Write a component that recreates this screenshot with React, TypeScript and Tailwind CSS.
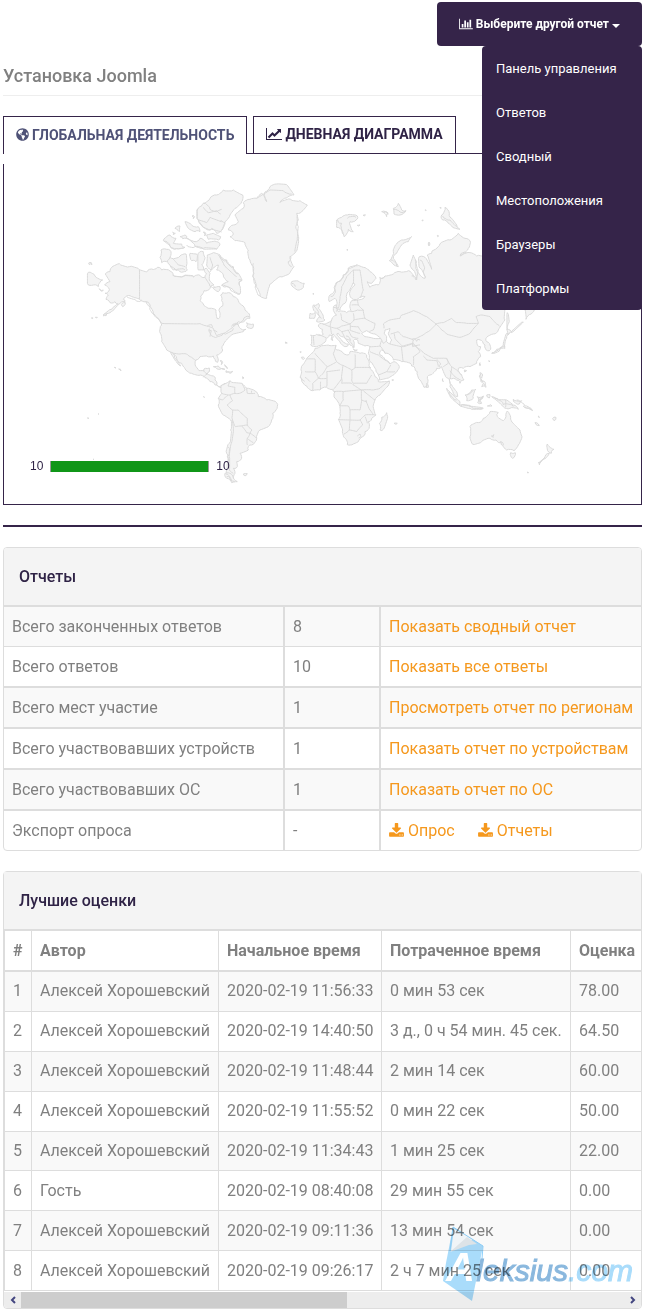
import { useState } from "react";
import { FaGlobeAmericas } from "react-icons/fa";

type Point = [number, number];

const reports = [
  { label: "Всего законченных ответов", value: "8", link: "Показать сводный отчет" },
  { label: "Всего ответов", value: "10", link: "Показать все ответы" },
  { label: "Всего мест участие", value: "1", link: "Просмотреть отчет по регионам" },
  { label: "Всего участвовавших устройств", value: "1", link: "Показать отчет по устройствам" },
  { label: "Всего участвовавших ОС", value: "1", link: "Показать отчет по ОС" },
];

const scores = [
  { author: "Алексей Хорошевский", start: "2020-02-19 11:56:33", spent: "0 мин 53 сек", score: "78.00" },
  { author: "Алексей Хорошевский", start: "2020-02-19 14:40:50", spent: "3 д., 0 ч 54 мин. 45 сек.", score: "64.50" },
  { author: "Алексей Хорошевский", start: "2020-02-19 11:48:44", spent: "2 мин 14 сек", score: "60.00" },
  { author: "Алексей Хорошевский", start: "2020-02-19 11:55:52", spent: "0 мин 22 сек", score: "50.00" },
  { author: "Алексей Хорошевский", start: "2020-02-19 11:34:43", spent: "1 мин 25 сек", score: "22.00" },
  { author: "Гость", start: "2020-02-19 08:40:08", spent: "29 мин 55 сек", score: "0.00" },
  { author: "Алексей Хорошевский", start: "2020-02-19 09:11:36", spent: "13 мин 54 сек", score: "0.00" },
  { author: "Алексей Хорошевский", start: "2020-02-19 09:26:17", spent: "2 ч 7 мин 25 сек", score: "0.00" },
];

const menuItems = ["Панель управления", "Ответов", "Сводный", "Местоположения", "Браузеры", "Платформы"];

// Map regions. Each one has its own origin, three units to a pixel.
const regions = [
  {
    x: 70,
    y: 170,
    land: [
      "148,281 178,290 208,299 230,306 245,297 262,292 275,300 300,303 310,316 340,318 372,320 390,316 405,322 410,312 402,300 410,295 420,310 418,330 432,345 420,355 402,362 392,378 390,392 400,402 420,415 438,420 440,440 446,446 450,436 447,422 458,408 455,392 452,375 458,368 475,368 490,380 505,392 515,405 525,420 538,432 540,445 525,452 505,455 490,466 505,464 512,476 528,478 520,485 490,492 470,510 460,525 458,540 440,555 445,570 443,577 435,568 430,558 410,558 390,560 378,570 378,590 387,602 402,602 406,595 418,594 418,605 412,612 430,618 435,630 440,645 453,648 465,640 455,654 445,650 435,645 420,635 405,623 387,616 365,610 345,595 335,580 320,565 305,548 290,540 275,515 271,490 275,465 265,445 250,430 240,410 228,395 208,387 185,380 170,378 160,388 165,395 150,400 135,415 115,430 100,438 125,418 145,402 135,395 120,398 108,388 115,375 105,370 118,358 104,345 120,335 106,312 120,305 125,292",
      "520,98 540,88 560,85 575,70 590,95 585,66 600,50 620,42 650,44 672,75 650,84 630,98 662,88 690,92 712,105 695,125 680,130 685,150 678,175 685,210 678,245 660,260 672,290 660,308 630,320 605,340 598,350 590,385 570,378 558,350 548,320 550,290 540,270 535,240 525,218 495,212 480,200 490,192 475,180 490,165 505,155 495,135 520,115",
      "400,100 420,85 440,75 460,60 490,60 518,75 515,95 495,115 480,135 465,155 455,180 440,190 425,175 415,180 395,165 385,150 385,115 395,108",
      "290,262 305,265 330,258 348,252 350,285 352,300 330,305 310,300 300,285",
      "273,240 290,238 303,245 300,262 290,275 275,278 270,262",
      "412,255 430,248 450,255 470,270 490,290 505,310 516,330 508,345 510,372 490,360 470,350 455,345 475,335 460,315 440,300 445,285 425,300 410,285",
      "280,212 300,195 318,205 310,220 335,222 345,232 320,236 300,228",
      "350,205 375,215 390,205 410,220 440,215 450,225 440,238 400,235 375,228",
      "345,155 365,165 385,170 390,185 375,185 355,175",
      "315,175 330,168 328,185",
      "410,195 430,190 452,200 445,210 415,208",
      "360,250 380,252 378,275 365,272",
      "385,250 400,245 405,262 395,285 400,300 385,300",
      "55,307 75,318 98,330 85,350 70,345 55,345",
      "530,458 550,462 548,474 530,470",
      "430,355 450,350 445,365",
      "56,279 64,278 66,284 58,284",
      "430,590 445,588 465,598 450,598 436,592",
      "468,602 488,604 480,610 468,607",
      "330,200 345,195 350,205 338,206",
      "88,356 100,360 92,362",
      "366,138 374,140 370,146",
      "64,444 68,443 68,446",
      "76,442 82,442 80,444",
      "100,434 110,432 104,437",
      "154,404 166,398 158,410",
      "308,186 316,190 310,194",
      "400,186 408,192 404,198",
    ],
    shores: [
      "385,115 385,150 395,165 425,178 455,186",
      "400,100 420,118 440,125 455,118",
      "452,150 465,158 456,180",
      "282,214 300,228 320,236 345,232",
      "350,225 375,230 400,237 440,236",
      "300,290 318,302 345,300",
      "450,258 470,272 490,292 505,312",
      "505,330 516,332 508,345",
      "455,346 480,356 510,372",
      "308,316 340,320 372,322",
      "405,322 418,342 434,350",
      "228,395 240,412 252,432 275,460",
      "170,380 195,388 215,390",
      "550,280 552,310 558,345 570,378",
      "683,135 685,170 682,210 675,245",
      "560,85 600,60 640,62 665,72",
      "660,258 655,275 665,290",
      "418,476 430,500 460,490 490,475",
      "485,470 505,462 520,450 538,440",
    ],
    borders: [
      "208,299 208,387",
      "275,460 390,461 410,468 430,475 440,497 462,490 490,470 504,456",
      "305,548 330,552 350,552 365,562 378,572",
      "400,112 415,128 440,122 452,132",
      "385,150 410,158 420,142 455,155",
      "412,468 425,464 428,472",
      "416,480 424,482 420,500",
      "430,480 442,486",
      "400,602 412,612 400,622",
      "420,306 428,285 420,262",
      "445,255 462,285 500,320",
      "310,268 325,285 345,290",
    ],
  },
  {
    x: 270,
    y: 170,
    land: [
      "178,395 180,375 195,360 205,335 220,315 235,295 260,284 280,292 300,305 318,325 305,340 292,335 300,352 325,345 330,325 345,318 370,312 390,305 415,302 430,320 440,330 430,300 420,285 430,255 440,275 440,300 455,320 465,325 450,295 448,260 465,262 485,298 472,255 485,250 492,240 510,222 540,210 565,190 585,205 600,212 595,235 570,258 600,248 620,258 640,262 700,270 760,300 790,350 780,380 720,390 708,415 705,450 685,480 670,492 650,502 650,515 660,525 662,538 652,542 645,525 638,515 620,510 622,525 632,530 625,545 632,560 620,580 600,590 580,595 565,595 575,615 582,630 570,640 560,630 550,625 540,625 545,645 560,665 563,680 550,670 540,650 535,625 525,615 515,590 500,595 480,615 472,625 470,645 462,652 450,630 442,605 435,595 425,588 415,578 395,575 370,570 360,555 345,550 335,540 330,555 345,570 360,582 372,575 388,590 375,610 350,625 328,630 318,605 300,575 298,562 295,550 300,530 285,528 265,520 263,510 250,512 250,535 240,525 230,512 215,500 205,490 200,492 215,510 235,522 228,530 210,515 190,492 178,495 168,505 160,520 145,528 122,525 122,495 140,493 160,493 158,478 145,465 160,462 185,450 200,435 190,415 198,405 205,425 230,428 245,425 240,405 245,392 275,388 285,380 265,386 245,385 240,365 255,345 248,340 235,365 230,385 225,400 210,420 200,405 195,385",
      "65,335 85,333 103,340 100,352 82,360 66,348",
      "200,150 215,142 232,135 262,138 258,150 240,155 250,185 235,178 222,200 215,180 200,172",
      "335,125 355,130 350,140",
      "370,115 385,100 395,120 408,122 390,135 372,132",
      "515,135 525,112 538,130 545,145 560,165 570,178 548,172 535,160 518,150",
      "425,200 415,215 395,225 380,250 370,265 385,290 372,285 358,272 370,245 380,222 400,210",
      "130,405 145,400 145,415 160,440 165,450 140,455 150,440 135,425",
      "120,430 135,428 133,445 118,445",
      "765,420 793,420 778,434 768,448",
      "185,495 190,500 188,512 183,508",
      "279,136 286,134 284,138",
      "262,166 270,165 266,168",
      "466,119 469,121 466,122",
      "456,150 460,151 457,153",
      "510,112 514,114 511,115",
      "477,216 480,222 477,228",
      "502,196 506,198 503,200",
      "231,238 234,240 231,241",
      "129,370 132,372 129,373",
      "46,516 50,518 47,520",
      "250,538 262,540 254,542",
    ],
    water: ["275,490 290,482 300,488 315,492 332,505 310,505 285,500", "345,480 360,475 355,490 365,510 360,522 350,515 350,500 342,490"],
    shores: [
      "182,380 195,360 205,335 220,315 235,295 262,288",
      "203,150 215,160 222,195",
      "232,145 258,142",
      "372,118 390,126 406,122",
      "340,128 354,134",
      "518,138 540,150 560,170",
      "362,270 380,288",
      "425,318 438,330 444,300 436,270",
      "450,270 462,300 468,322",
      "132,408 145,425 155,445",
      "66,340 76,350",
      "228,498 240,515 252,532",
      "328,322 345,318",
      "570,256 590,248",
      "192,412 200,425",
    ],
    borders: [
      "342,475 340,462 360,450 390,445 395,435 430,422 450,430 470,440 498,462 520,458 545,445 560,458 590,460 625,460 612,474 600,490 570,502 530,492 515,480 498,462",
      "362,492 385,485 400,500 430,510 460,495 475,485 498,462",
      "625,460 618,440 636,435 660,440 680,462 690,470",
      "205,415 210,380 215,350 230,320 250,300 270,300 275,330 280,360 272,384",
      "250,300 250,340",
      "262,390 265,405 280,420 285,445 315,460 310,480 298,486",
      "245,405 265,405",
      "245,425 262,420 280,420",
      "212,430 215,450 240,462 252,450 250,430",
      "252,450 285,445",
      "185,450 180,470 200,475 215,468 240,462 240,480 270,490",
      "158,462 182,472 185,492",
      "200,475 215,485 235,480 245,500 265,505",
      "215,485 225,505 240,510",
      "130,495 132,525",
      "145,493 168,503",
      "240,468 265,470 275,485",
      "332,505 340,520 350,512",
      "300,530 330,528 335,512",
      "330,528 345,550",
      "300,545 325,555 345,570 360,582",
      "360,522 395,530 400,575",
      "395,530 430,520 450,545 430,560 430,585",
      "372,490 375,505 400,530 430,520",
      "430,510 428,530 450,525",
      "425,520 445,535 462,550 490,565 530,565 535,580 520,590",
      "460,558 470,570 500,572 505,590",
      "530,565 545,590 540,625",
      "545,590 560,600 575,615",
      "540,602 555,620 572,630",
      "325,615 350,605 375,605",
      "350,605 362,585",
    ],
  },
  {
    x: 290,
    y: 300,
    land: [
      "75,145 90,140 120,137 138,136 140,150 160,160 175,165 180,155 210,160 230,165 230,172 238,190 245,210 255,230 265,245 298,243 290,262 270,285 255,300 250,315 258,345 245,355 235,365 238,380 225,395 218,410 205,425 190,432 172,434 165,415 158,390 145,358 150,340 148,315 135,295 135,275 128,268 110,262 90,270 68,272 50,258 35,240 30,232 35,215 38,195 50,175 65,160",
      "290,338 293,350 280,388 270,390 268,370 275,352",
      "540,380 565,368 580,355 600,335 625,338 622,350 640,362 648,350 652,333 662,352 670,370 690,390 696,410 685,435 672,452 650,450 638,436 634,428 626,428 618,420 600,415 575,425 548,433 540,410",
      "662,458 676,458 668,475",
      "772,432 785,445 792,448 784,460 776,456",
      "778,460 765,476 748,495 745,488 765,470",
      "605,290 625,300 650,300 670,315 685,328 660,325 640,320 625,305",
      "525,285 545,270 558,268 550,295 530,302",
      "470,265 490,285 510,305 508,315 485,295",
      "508,316 540,320 580,325 540,325",
      "562,290 580,288 570,300 575,310 563,308",
      "570,218 578,225 575,235 568,230",
      "580,250 588,262 575,260",
      "574,238 580,246 572,244",
      "650,100 660,98 650,115 645,145 625,150 605,160 620,148 640,135",
      "650,88 665,95 655,105",
      "652,38 656,70 652,88",
      "410,250 415,262 408,262",
      "570,188 573,195 568,196",
      "523,210 530,212 524,216",
      "670,298 695,302 688,312 676,308",
      "700,318 715,325 728,332 712,324",
      "735,368 745,372 748,377",
      "788,356 798,352 792,362",
      "604,408 612,404 610,412",
      "590,285 600,284 598,294",
      "592,318 602,314 606,318",
      "458,236 461,244 458,244",
      "306,239 311,240 307,242",
      "312,370 322,370 318,373",
      "30,155 34,156 31,158",
      "34,172 44,175 36,176",
      "664,98 700,66 668,96",
      "712,516 716,518 713,519",
      "745,348 749,352 746,352",
      "596,182 600,184 597,185",
    ],
    shores: [
      "530,285 548,272",
      "564,296 580,290 570,308",
      "512,318 545,322 578,324",
      "615,296 640,314 670,320",
      "680,300 705,318 726,330",
      "478,275 500,300",
      "606,158 630,148 646,140",
      "572,222 578,242 584,258",
      "440,178 452,192 450,202",
      "365,118 380,124 390,120",
      "746,490 764,474",
      "32,236 44,244",
      "630,425 640,436",
    ],
    borders: [
      "50,177 75,177 75,215 45,215",
      "75,160 112,200",
      "138,136 130,160 140,185 112,200 100,220",
      "140,185 155,195 185,210",
      "195,163 195,203 243,203",
      "185,210 195,203",
      "185,210 185,240 190,250 230,250 245,225",
      "160,195 155,235 130,268",
      "110,215 150,210",
      "110,215 110,260",
      "155,235 155,250 185,250 215,270 245,270 270,265 298,243",
      "160,275 215,270 215,300 210,330 180,330 175,318 150,318",
      "160,275 160,300 150,318",
      "145,358 210,360 225,345 255,345",
      "180,330 180,362 178,390 162,402",
      "178,390 200,395 218,375 210,360",
      "218,270 255,300",
      "202,408 210,402 213,410 206,414",
      "75,215 85,235 68,250 68,272",
      "85,235 110,235",
      "45,232 60,245",
      "92,245 92,268",
      "100,220 85,235",
      "135,275 160,275",
      "228,300 240,330 250,345",
      "215,300 230,305",
      "647,300 647,322",
      "232,370 225,350",
    ],
  },
  {
    x: 0,
    y: 330,
    land: [
      "665,165 690,152 700,158 725,160 740,175 765,183 775,200 800,210 830,218 832,230 818,250 815,270 805,290 780,300 770,325 755,345 745,350 745,360 720,370 725,385 710,395 712,410 700,415 705,430 700,450 685,440 680,420 682,400 680,370 688,340 692,300 692,270 670,255 655,225 655,205 665,190",
      "675,430 690,430 700,444 712,455 695,458 680,445",
      "730,432 742,431 738,437",
      "512,66 524,82 542,108 530,96",
      "343,112 348,114",
      "356,117 363,123",
      "610,200 614,202",
      "262,264 267,265",
      "856,38 862,39",
      "660,92 668,98 664,104",
      "674,104 682,116 676,110",
      "728,140 732,144 728,146",
      "294,251 297,253",
      "279,387 282,389",
    ],
    shores: ["678,432 690,446 704,454", "680,440 694,452", "684,350 682,380 680,405"],
    borders: [
      "690,152 684,168 705,172 705,190 690,195 698,212 682,225 698,240 715,240 742,265 742,285 756,300 750,310 770,325",
      "725,160 735,180 718,190 705,190",
      "740,175 742,190 765,190",
      "755,182 752,192",
      "655,205 668,210 684,196",
      "698,240 696,262 706,290 725,288 742,285",
      "725,288 740,308 750,310 742,325 742,345",
      "696,270 700,300 694,340 688,380 688,420 700,430",
      "742,325 760,338",
      "665,190 690,195",
    ],
  },
];

// Breaks straight runs into short steps so that coastlines look ragged
function coast(points: string, amount: number, close: boolean) {
  const list = points.split(" ").map((p) => p.split(",").map(Number) as Point);
  if (close) list.push(list[0]);
  let d = `M${list[0][0]} ${list[0][1]}`;
  for (let i = 1; i < list.length; i++) {
    const [ax, ay] = list[i - 1];
    const [bx, by] = list[i];
    const len = Math.hypot(bx - ax, by - ay);
    const steps = Math.min(12, Math.max(1, Math.round(len / 5)));
    for (let s = 1; s < steps; s++) {
      const k = Math.sin(ax * 12.9 + by * 78.2 + s * 37.7) * amount;
      const x = ax + ((bx - ax) * s) / steps - ((by - ay) / len) * k;
      const y = ay + ((by - ay) * s) / steps + ((bx - ax) / len) * k;
      d += `L${x.toFixed(1)} ${y.toFixed(1)}`;
    }
    d += `L${bx} ${by}`;
  }
  return close ? d + "Z" : d;
}

function WorldMap() {
  return (
    <svg viewBox="4 164 637 340" className="block h-full w-full" role="img" aria-label="Карта мира">
      {regions.map((region, i) => (
        <g key={i} transform={`translate(${region.x} ${region.y}) scale(0.3333)`} strokeLinejoin="round" strokeWidth={3} stroke="#dadada" fill="#f4f4f4">
          {region.land.map((points) => (
            <path key={points} d={coast(points, 3, true)} />
          ))}
          {region.water?.map((points) => (
            <path key={points} d={coast(points, 1, true)} fill="#fff" />
          ))}
          {region.shores.map((points) => (
            <path key={points} d={coast(points, 5, false)} fill="none" />
          ))}
          {region.borders.map((points) => (
            <path key={points} d={coast(points, 1, false)} fill="none" />
          ))}
        </g>
      ))}
    </svg>
  );
}

function BarChartIcon() {
  return (
    <svg viewBox="0 0 2048 1792" fill="currentColor" className="h-3 w-3.5" aria-hidden="true">
      <path d="M640 896v512h-256v-512h256zm384-512v1024h-256v-1024h256zm1024 1152v128h-2048v-1536h128v1408h1920zm-640-896v768h-256v-768h256zm384-384v1152h-256v-1152h256z" />
    </svg>
  );
}

function LineChartIcon() {
  return (
    <svg viewBox="0 0 2048 1792" fill="currentColor" className="h-3.5 w-4" aria-hidden="true">
      <path d="M2048 1536v128h-2048v-1536h128v1408h1920zm-128-1248v435q0 21-19.500 29.500t-35.500-7.500l-121-121-633 633q-10 10-23 10t-23-10l-233-233-416 416-192-192 585-585q10-10 23-10t23 10l233 233 464-464-121-121q-16-16-7.500-35.500t29.500-19.500h435q14 0 23 9t9 23z" />
    </svg>
  );
}

function DownloadIcon() {
  return (
    <svg viewBox="0 0 1664 1792" fill="currentColor" className="h-4 w-[15px]" aria-hidden="true">
      <path d="M1280 1344q0-26-19-45t-45-19-45 19-19 45 19 45 45 19 45-19 19-45zm256 0q0-26-19-45t-45-19-45 19-19 45 19 45 45 19 45-19 19-45zm128-224v320q0 40-28 68t-68 28h-1472q-40 0-68-28t-28-68v-320q0-40 28-68t68-28h465l135 136q58 56 136 56t136-56l136-136h464q40 0 68 28t28 68zm-325-569q17 41-14 70l-448 448q-18 19-45 19t-45-19l-448-448q-31-29-14-70 17-39 59-39h256v-448q0-26 19-45t45-19h256q26 0 45 19t19 45v448h256q42 0 59 39z" />
    </svg>
  );
}

function Arrow({ left = false }: { left?: boolean }) {
  return (
    <svg viewBox="0 0 6 8" className="h-2 w-1.5" fill="none" stroke="#434680" strokeWidth={2} aria-hidden="true">
      <path d={left ? "M5 1L2 4l3 3" : "M1 1l3 3-3 3"} />
    </svg>
  );
}

// Lies over the last rows, the table text stays readable through it
function Watermark() {
  return (
    <div className="pointer-events-none absolute right-2 bottom-[5px] h-[78px] w-[190px] mix-blend-multiply">
      <svg viewBox="0 0 42 78" className="absolute bottom-0 left-0 h-[78px] w-[42px]" aria-hidden="true">
        <path d="M10 2L40 21 29 76 0 56 3 38z" fill="#a9dcfb" />
        <path d="M11 4L31 14 20 19 8 26z" fill="#f6fafd" />
        <path d="M7 27L24 12 34 19 26 20z" fill="#e3e9ed" />
        <path d="M10 2L40 21 39 34M10 2L7 26" stroke="#8fd0fa" fill="none" />
      </svg>
      <span className="absolute bottom-[14px] left-[3px] font-['Liberation_Sans'] text-[40px] leading-[44px] font-bold text-white italic">A</span>
      <span className="absolute right-0 bottom-[16px] font-['Liberation_Sans'] text-[30px] leading-8 whitespace-nowrap text-[#8ab8de] italic [-webkit-text-stroke:1px]">
        leksius<span className="text-[#a9dcfb]">.com</span>
      </span>
    </div>
  );
}

export default function App() {
  const [menuOpen, setMenuOpen] = useState(true);

  return (
    <div className="bg-white pt-0.5 pr-1 pb-1 pl-[3px] font-['Roboto',sans-serif] text-base text-[#808080]">
      <header className="flex justify-end">
        <div className="relative">
          <button
            type="button"
            aria-expanded={menuOpen}
            onClick={() => setMenuOpen(!menuOpen)}
            className="flex h-11 items-center gap-[3px] rounded bg-[#352449] px-[22px] text-xs font-bold text-white"
          >
            <BarChartIcon />
            Выберите другой отчет
            <span className="mt-1 border-x-4 border-t-4 border-x-transparent border-t-white" />
          </button>
          {menuOpen && (
            <nav className="absolute top-full right-0 z-10 w-40 rounded bg-[#352449]">
              {menuItems.map((item) => (
                <a key={item} href="#" className="block h-11 px-3.5 text-[13px] leading-[46px] text-white">
                  {item}
                </a>
              ))}
            </nav>
          )}
        </div>
      </header>

      <h1 className="mt-5 border-b border-[#eeeeee] pb-[9px] text-lg leading-5 font-medium">Установка Joomla</h1>

      <div className="mt-5 flex h-[38px] text-sm font-bold text-[#2f2346]">
        <button type="button" className="flex items-center gap-[3px] border-x border-t border-[#352449] px-3 pb-0.5 text-[#4f5277]">
          <FaGlobeAmericas size={13} />
          ГЛОБАЛЬНАЯ ДЕЯТЕЛЬНОСТЬ
        </button>
        <span className="w-1.5 border-b border-[#352449]" />
        <button type="button" className="flex items-center gap-[3px] border border-[#352449] px-3 pb-0.5">
          <LineChartIcon />
          ДНЕВНАЯ ДИАГРАММА
        </button>
        <span className="flex-1 border-b border-[#352449]" />
      </div>

      <section className="relative mt-2.5 border-x border-b border-[#352449]">
        <div className="h-[340px]">
          <WorldMap />
        </div>
        <div className="absolute bottom-8 left-[26px] flex items-center gap-[7px] font-['Liberation_Sans',sans-serif] text-xs leading-3 text-[#2f2346]">
          <span>10</span>
          <span className="h-[11px] w-[159px] border-x border-[#999999] bg-[#109618]" />
          <span>10</span>
        </div>
      </section>

      <hr className="mt-5 border-t-2 border-[#352449]" />

      <section className="mt-5 overflow-hidden rounded border border-[#dddddd]">
        <h2 className="border-b-2 border-[#dddddd] bg-[#f4f4f4] px-[15px] leading-[57px] font-medium text-[#2f2346]">Отчеты</h2>
        <table className="w-full table-fixed border-separate border-spacing-0 text-left leading-[23px]">
          <colgroup>
            <col className="w-[281px]" />
            <col className="w-24" />
            <col />
          </colgroup>
          <tbody className="[&_td]:border-[#dddddd] [&_td]:p-2 [&_th]:border-[#dddddd] [&_th]:p-2">
            {reports.map((row) => (
              <tr key={row.label} className="odd:bg-[#f9f9f9] [&>*]:border-b-2 first:[&>*]:border-b">
                <th scope="row" className="border-r-2 font-normal">{row.label}</th>
                <td className="border-r-2">{row.value}</td>
                <td className="whitespace-nowrap">
                  <a href="#" className="text-[#f5981d]">{row.link}</a>
                </td>
              </tr>
            ))}
            <tr>
              <th scope="row" className="border-r-2 font-normal">Экспорт опроса</th>
              <td className="border-r-2">-</td>
              <td>
                <div className="flex gap-[23px] text-[#f5981d]">
                  <a href="#" className="flex items-center gap-1"><DownloadIcon />Опрос</a>
                  <a href="#" className="flex items-center gap-1"><DownloadIcon />Отчеты</a>
                </div>
              </td>
            </tr>
          </tbody>
        </table>
      </section>

      <section className="relative mt-5 rounded border border-[#dddddd]">
        <h2 className="border-b-2 border-[#dddddd] bg-[#f4f4f4] px-[15px] leading-[57px] font-medium text-[#2f2346]">Лучшие оценки</h2>
        <table className="h-[360px] w-full table-fixed border-separate border-spacing-0 border-l border-[#dddddd] text-left leading-[22px] whitespace-nowrap [&_td]:border-[#dddddd] [&_td]:px-2 [&_th]:border-[#dddddd] [&_th]:px-2">
          <colgroup>
            <col className="w-[27px]" />
            <col className="w-[187px]" />
            <col className="w-[163px]" />
            <col className="w-[189px]" />
            <col />
          </colgroup>
          <thead>
            <tr className="h-[41px] [&>th]:border-r [&>th]:border-b-2 [&>th]:font-bold [&>th:last-child]:border-r-0">
              <th>#</th>
              <th>Автор</th>
              <th>Начальное время</th>
              <th>Потраченное время</th>
              <th>Оценка</th>
            </tr>
          </thead>
          <tbody>
            {scores.map((row, i) => (
              <tr key={i} className="odd:bg-[#f9f9f9] [&>td]:border-r [&>td]:border-b [&>td:last-child]:border-r-0">
                <td>{i + 1}</td>
                <td>{row.author}</td>
                <td>{row.start}</td>
                <td>{row.spent}</td>
                <td>{row.score}</td>
              </tr>
            ))}
          </tbody>
        </table>
        <div className="mt-px flex h-4 items-stretch rounded-b bg-[#ededed]">
          <button type="button" aria-label="Прокрутить влево" className="flex w-[17px] items-center justify-center"><Arrow left /></button>
          <div className="flex-1">
            <div className="h-full w-[54%] bg-[#cdcdcd]" />
          </div>
          <button type="button" aria-label="Прокрутить вправо" className="flex w-[17px] items-center justify-center"><Arrow /></button>
        </div>
        <Watermark />
      </section>
    </div>
  );
}
